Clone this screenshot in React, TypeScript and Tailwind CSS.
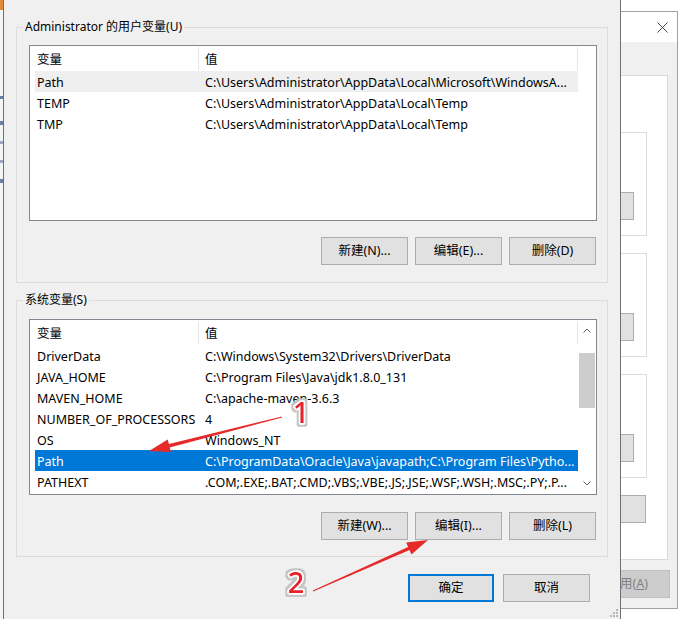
import { JSX } from "react";
import clsx from "clsx";

interface VarRow {
  name: string;
  value: string;
  state?: "hover" | "selected";
}

const userRows: VarRow[] = [
  {
    name: "Path",
    value: "C:\\Users\\Administrator\\AppData\\Local\\Microsoft\\WindowsA...",
    state: "hover",
  },
  { name: "TEMP", value: "C:\\Users\\Administrator\\AppData\\Local\\Temp" },
  { name: "TMP", value: "C:\\Users\\Administrator\\AppData\\Local\\Temp" },
];

const systemRows: VarRow[] = [
  { name: "DriverData", value: "C:\\Windows\\System32\\Drivers\\DriverData" },
  { name: "JAVA_HOME", value: "C:\\Program Files\\Java\\jdk1.8.0_131" },
  { name: "MAVEN_HOME", value: "C:\\apache-maven-3.6.3" },
  { name: "NUMBER_OF_PROCESSORS", value: "4" },
  { name: "OS", value: "Windows_NT" },
  {
    name: "Path",
    value: "C:\\ProgramData\\Oracle\\Java\\javapath;C:\\Program Files\\Pytho...",
    state: "selected",
  },
  {
    name: "PATHEXT",
    value: ".COM;.EXE;.BAT;.CMD;.VBS;.VBE;.JS;.JSE;.WSF;.WSH;.MSC;.PY;.P...",
  },
];

const Chevron = ({ down }: { down?: boolean }) => (
  <svg width="8" height="5" viewBox="0 0 8 5" className={clsx(down && "rotate-180")}>
    <polyline points="0.5,4.5 4,1 7.5,4.5" fill="none" stroke="#606060" strokeWidth="1" />
  </svg>
);

const Btn = ({ label, primary }: { label: string; primary?: boolean }) => (
  <button
    className={clsx(
      "flex h-[28px] items-center justify-center bg-[#e1e1e1] pt-px text-[12.5px] text-black",
      primary ? "w-[86px] border-2 border-[#0078d7]" : "w-[87px] border border-[#adadad]",
    )}
  >
    {label}
  </button>
);

const VarList = ({
  rows,
  scroll,
  className,
}: {
  rows: VarRow[];
  scroll?: boolean;
  className?: string;
}): JSX.Element => (
  <div
    className={clsx(
      "ml-[12px] mr-[10px] flex h-[176px] border border-[#828790] bg-white text-[12.5px]",
      className,
    )}
  >
    <div className="flex min-w-0 flex-1 flex-col">
      <div className="flex h-[25px] shrink-0 items-center">
        <div className="w-[168px] shrink-0 pl-[7px] pt-[4px]">变量</div>
        <div className="h-[23px] w-px bg-[#e5e5e5]" />
        <div className="flex-1 pl-[6px] pt-[4px]">值</div>
        <div className="h-[23px] w-px bg-[#e5e5e5]" />
      </div>
      {rows.map((r) => (
        <div
          key={r.name}
          className={clsx(
            "ml-[5px] flex h-[21px] shrink-0 items-center pt-[4px]",
            r.state === "hover" && "bg-[#efefef]",
            r.state === "selected" && "bg-[#0078d7] text-white",
          )}
        >
          <div className="w-[170px] shrink-0 whitespace-nowrap pl-[2px]">{r.name}</div>
          <div className="min-w-0 flex-1 overflow-hidden whitespace-nowrap">{r.value}</div>
        </div>
      ))}
    </div>
    <div className="flex w-[18px] flex-col items-center">
      {scroll && (
        <>
          <div className="flex h-[21px] items-center justify-center">
            <Chevron />
          </div>
          <div className="h-[12px]" />
          <div className="h-[55px] w-[16px] bg-[#cdcdcd]" />
          <div className="flex-1" />
          <div className="flex h-[21px] items-center justify-center">
            <Chevron down />
          </div>
        </>
      )}
    </div>
  </div>
);

const Group = ({
  title,
  rows,
  scroll,
  buttons,
  className,
  listTop,
  btnTop,
  bottom,
}: {
  title: string;
  rows: VarRow[];
  scroll?: boolean;
  buttons: string[];
  className?: string;
  listTop: string;
  btnTop: string;
  bottom: string;
}) => (
  <fieldset className={clsx("mx-3 border border-[#dcdcdc]", className)}>
    <legend className="ml-[6px] px-[2px] text-[12px] leading-[18px]">{title}</legend>
    <VarList rows={rows} scroll={scroll} className={listTop} />
    <div className={clsx("mr-[11px] flex justify-end gap-[7px]", btnTop, bottom)}>
      {buttons.map((b) => (
        <Btn key={b} label={b} />
      ))}
    </div>
  </fieldset>
);

const SideBox = () => (
  <div className="mr-[20px] flex h-[104px] flex-col border-y border-r border-[#dcdcdc]">
    <div className="mr-[12px] mt-[59px] h-[28px] border-y border-r border-[#adadad] bg-[#e1e1e1]" />
  </div>
);

// red arrows and numbers drawn over the screenshot
const Annotations = () => (
  <svg className="pointer-events-none absolute inset-0" width="678" height="619">
    <defs>
      <filter id="halo" x="-50%" y="-50%" width="200%" height="200%">
        <feMorphology operator="dilate" radius="1.6" in="SourceAlpha" result="grown" />
        <feFlood floodColor="#c4c4c4" />
        <feComposite in2="grown" operator="in" result="ring" />
        <feMerge>
          <feMergeNode in="ring" />
          <feMergeNode in="SourceGraphic" />
        </feMerge>
      </filter>
    </defs>
    <polygon
      points="281.9,416.4 168.9,444.1 167.7,439.5 149,451 170.9,452.1 169.7,447.5 282.1,417.6"
      fill="#e62a2a"
    />
    <polygon
      points="312.8,590.5 408.1,546.9 406.2,542.6 428,540 411.4,554.4 409.5,550.1 313.2,591.5"
      fill="#e62a2a"
    />
    {[
      { t: "1", x: 301, y: 423 },
      { t: "2", x: 296, y: 593 },
    ].map((l) => (
      <text
        key={l.t}
        x={l.x}
        y={l.y}
        fontFamily="Noto Sans, sans-serif"
        fontSize="29"
        fontWeight="500"
        textAnchor="middle"
        fill="#e8202a"
        stroke="#ffffff"
        strokeWidth="3.5"
        strokeLinejoin="round"
        paintOrder="stroke"
        filter="url(#halo)"
      >
        {l.t}
      </text>
    ))}
  </svg>
);

const App = (): JSX.Element => {
  return (
    <div className="relative flex h-[619px] w-[678px] overflow-hidden bg-white font-['Noto_Sans','Noto_Sans_CJK_SC',sans-serif] text-[12px] text-black">
      {/* background window edge on the left */}
      <div className="flex w-[3px] shrink-0 flex-col bg-[#f4f5f7]">
        <div className="h-[10px] bg-[#e08a3c]" />
        <div className="mt-[86px] h-[3px] bg-[#6a7fa8]" />
        <div className="mt-[22px] h-[4px] bg-[#6a7fa8]" />
        <div className="mt-[16px] h-[3px] bg-[#9aa7bf]" />
        <div className="mt-[16px] h-[3px] bg-[#9aa7bf]" />
        <div className="mt-[16px] h-[4px] bg-[#6a7fa8]" />
      </div>

      {/* environment variables dialog */}
      <div className="flex w-[618px] shrink-0 flex-col border-x border-[#707070] bg-[#f0f0f0] pt-[18px]">
        <Group
          title="Administrator 的用户变量(U)"
          rows={userRows}
          buttons={["新建(N)...", "编辑(E)...", "删除(D)"]}
          listTop="mt-[9px]"
          btnTop="mt-[16px]"
          bottom="mb-[17px]"
        />
        <Group
          title="系统变量(S)"
          rows={systemRows}
          scroll
          buttons={["新建(W)...", "编辑(I)...", "删除(L)"]}
          className="mt-[8px]"
          listTop="mt-[10px]"
          btnTop="mt-[17px]"
          bottom="mb-[16px]"
        />
        <div className="mt-[17px] flex justify-end gap-[9px] pr-[30px]">
          <Btn label="确定" primary />
          <Btn label="取消" />
        </div>
        <div className="mt-[7px] flex justify-end pr-[1px]">
          <svg width="9" height="9" viewBox="0 0 9 9">
            {[
              [6, 0],
              [3, 3],
              [6, 3],
              [0, 6],
              [3, 6],
              [6, 6],
            ].map(([x, y]) => (
              <rect key={`${x}-${y}`} x={x} y={y} width="2" height="2" fill="#b8b8b8" />
            ))}
          </svg>
        </div>
      </div>

      {/* system properties window behind */}
      <div className="flex w-[57px] shrink-0 flex-col bg-white pt-[11px]">
        <div className="flex h-[598px] flex-col border-y border-r border-[#a0a0a0]">
          <div className="flex h-[30px] items-center justify-end bg-white pr-[9px]">
            <svg width="11" height="11" viewBox="0 0 11 11">
              <path d="M0.5 0.5 L10.5 10.5 M10.5 0.5 L0.5 10.5" stroke="#444" strokeWidth="1" />
            </svg>
          </div>
          <div className="flex flex-1 flex-col bg-[#f0f0f0] pt-[33px]">
            <div className="mr-[9px] flex h-[485px] flex-col border-y border-r border-[#d9d9d9] bg-white pt-[56px]">
              <SideBox />
              <div className="mt-[17px]">
                <SideBox />
              </div>
              <div className="mt-[17px]">
                <SideBox />
              </div>
              <div className="mr-[21px] mt-[17px] h-[28px] border-y border-r border-[#adadad] bg-[#e1e1e1]" />
            </div>
            <div className="mr-[7px] mt-[10px] flex h-[28px] items-center border-y border-r border-[#bfbfbf] bg-[#cccccc] pt-px text-[12.5px] text-[#838383]">
              <span className="-ml-px">
                用(<span className="underline">A</span>)
              </span>
            </div>
          </div>
        </div>
      </div>

      <Annotations />
    </div>
  );
};

export default App;
